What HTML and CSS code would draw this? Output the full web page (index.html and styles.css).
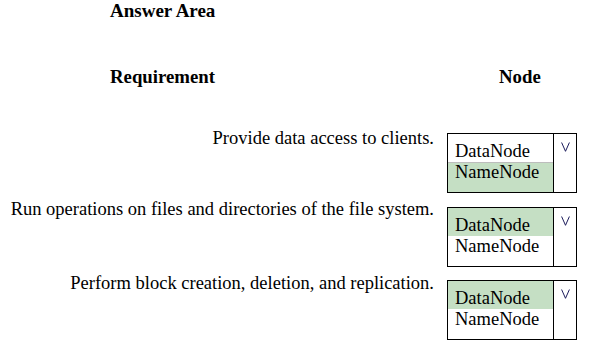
FILE: index.html
```html
<!DOCTYPE html>
<html>
<head>
<meta charset="utf-8">
<link rel="stylesheet" href="styles.css">
</head>
<body>
<div class="page">
  <div class="title">Answer Area</div>
  <div class="head">
    <div class="head-req">Requirement</div>
    <div class="head-node">Node</div>
  </div>
  <div class="rows">
    <div class="row">
      <div class="req">Provide data access to clients.</div>
      <div class="box off7">
        <div class="list">
          <div class="item first">DataNode</div>
          <div class="item second sel">NameNode</div>
        </div>
        <div class="arrow"><svg width="9" height="10" viewBox="0 0 9 10"><path d="M0.6 0.5 L4.5 9.3 L8.4 0.5" fill="none" stroke="#1c1c5c" stroke-width="1"/></svg></div>
      </div>
    </div>
    <div class="row">
      <div class="req">Run operations on files and directories of the file system.</div>
      <div class="box off10">
        <div class="list">
          <div class="item first sel">DataNode</div>
          <div class="item second">NameNode</div>
        </div>
        <div class="arrow"><svg width="9" height="10" viewBox="0 0 9 10"><path d="M0.6 0.5 L4.5 9.3 L8.4 0.5" fill="none" stroke="#1c1c5c" stroke-width="1"/></svg></div>
      </div>
    </div>
    <div class="row">
      <div class="req">Perform block creation, deletion, and replication.</div>
      <div class="box off9">
        <div class="list">
          <div class="item first sel">DataNode</div>
          <div class="item second">NameNode</div>
        </div>
        <div class="arrow"><svg width="9" height="10" viewBox="0 0 9 10"><path d="M0.6 0.5 L4.5 9.3 L8.4 0.5" fill="none" stroke="#1c1c5c" stroke-width="1"/></svg></div>
      </div>
    </div>
  </div>
</div>
</body>
</html>
```

FILE: styles.css
```css
html, body {
  margin: 0;
  padding: 0;
  background: #ffffff;
}
body {
  font-family: "Liberation Serif", "Times New Roman", serif;
  font-size: 19px;
  color: #000;
}
.page {
  width: 609px;
}
.title {
  font-weight: bold;
  line-height: 22px;
  padding-left: 110px;
}
.head {
  display: grid;
  grid-template-columns: 434px 130px;
  column-gap: 13px;
  margin-top: 44px;
  font-weight: bold;
  font-size: 18.8px;
  line-height: 22px;
}
.head-req {
  padding-left: 110px;
}
.head-node {
  padding-left: 52px;
}
.rows {
  display: flex;
  flex-direction: column;
  gap: 4px;
  margin-top: 38px;
}
.row {
  display: grid;
  grid-template-columns: 434px 130px;
  column-gap: 13px;
  align-items: start;
}
.req {
  text-align: right;
  white-space: nowrap;
  font-size: 18.5px;
  line-height: 22px;
  padding-top: 1px;
}
.box {
  box-sizing: border-box;
  width: 130px;
  height: 60px;
  border: 1px solid #000;
  display: grid;
  grid-template-columns: 1fr 22px;
}
.off7 { margin-top: 7px; }
.off10 { margin-top: 10px; }
.off9 { margin-top: 9px; }
.list {
  border-right: 1px solid #000;
  display: flex;
  flex-direction: column;
}
.item {
  font-size: 18.5px;
  line-height: 21px;
  padding-left: 7px;
  white-space: nowrap;
}
.item.first {
  padding-top: 7px;
  height: 21px;
}
.item.second {
  flex: 1;
}
.item.sel {
  background: #c5dfc4;
}
.item.second.sel {
  box-shadow: inset 0 1px 0 #bdbdbd;
}
.arrow {
  display: flex;
  justify-content: center;
  padding-top: 8px;
}
.arrow svg {
  display: block;
}
```
